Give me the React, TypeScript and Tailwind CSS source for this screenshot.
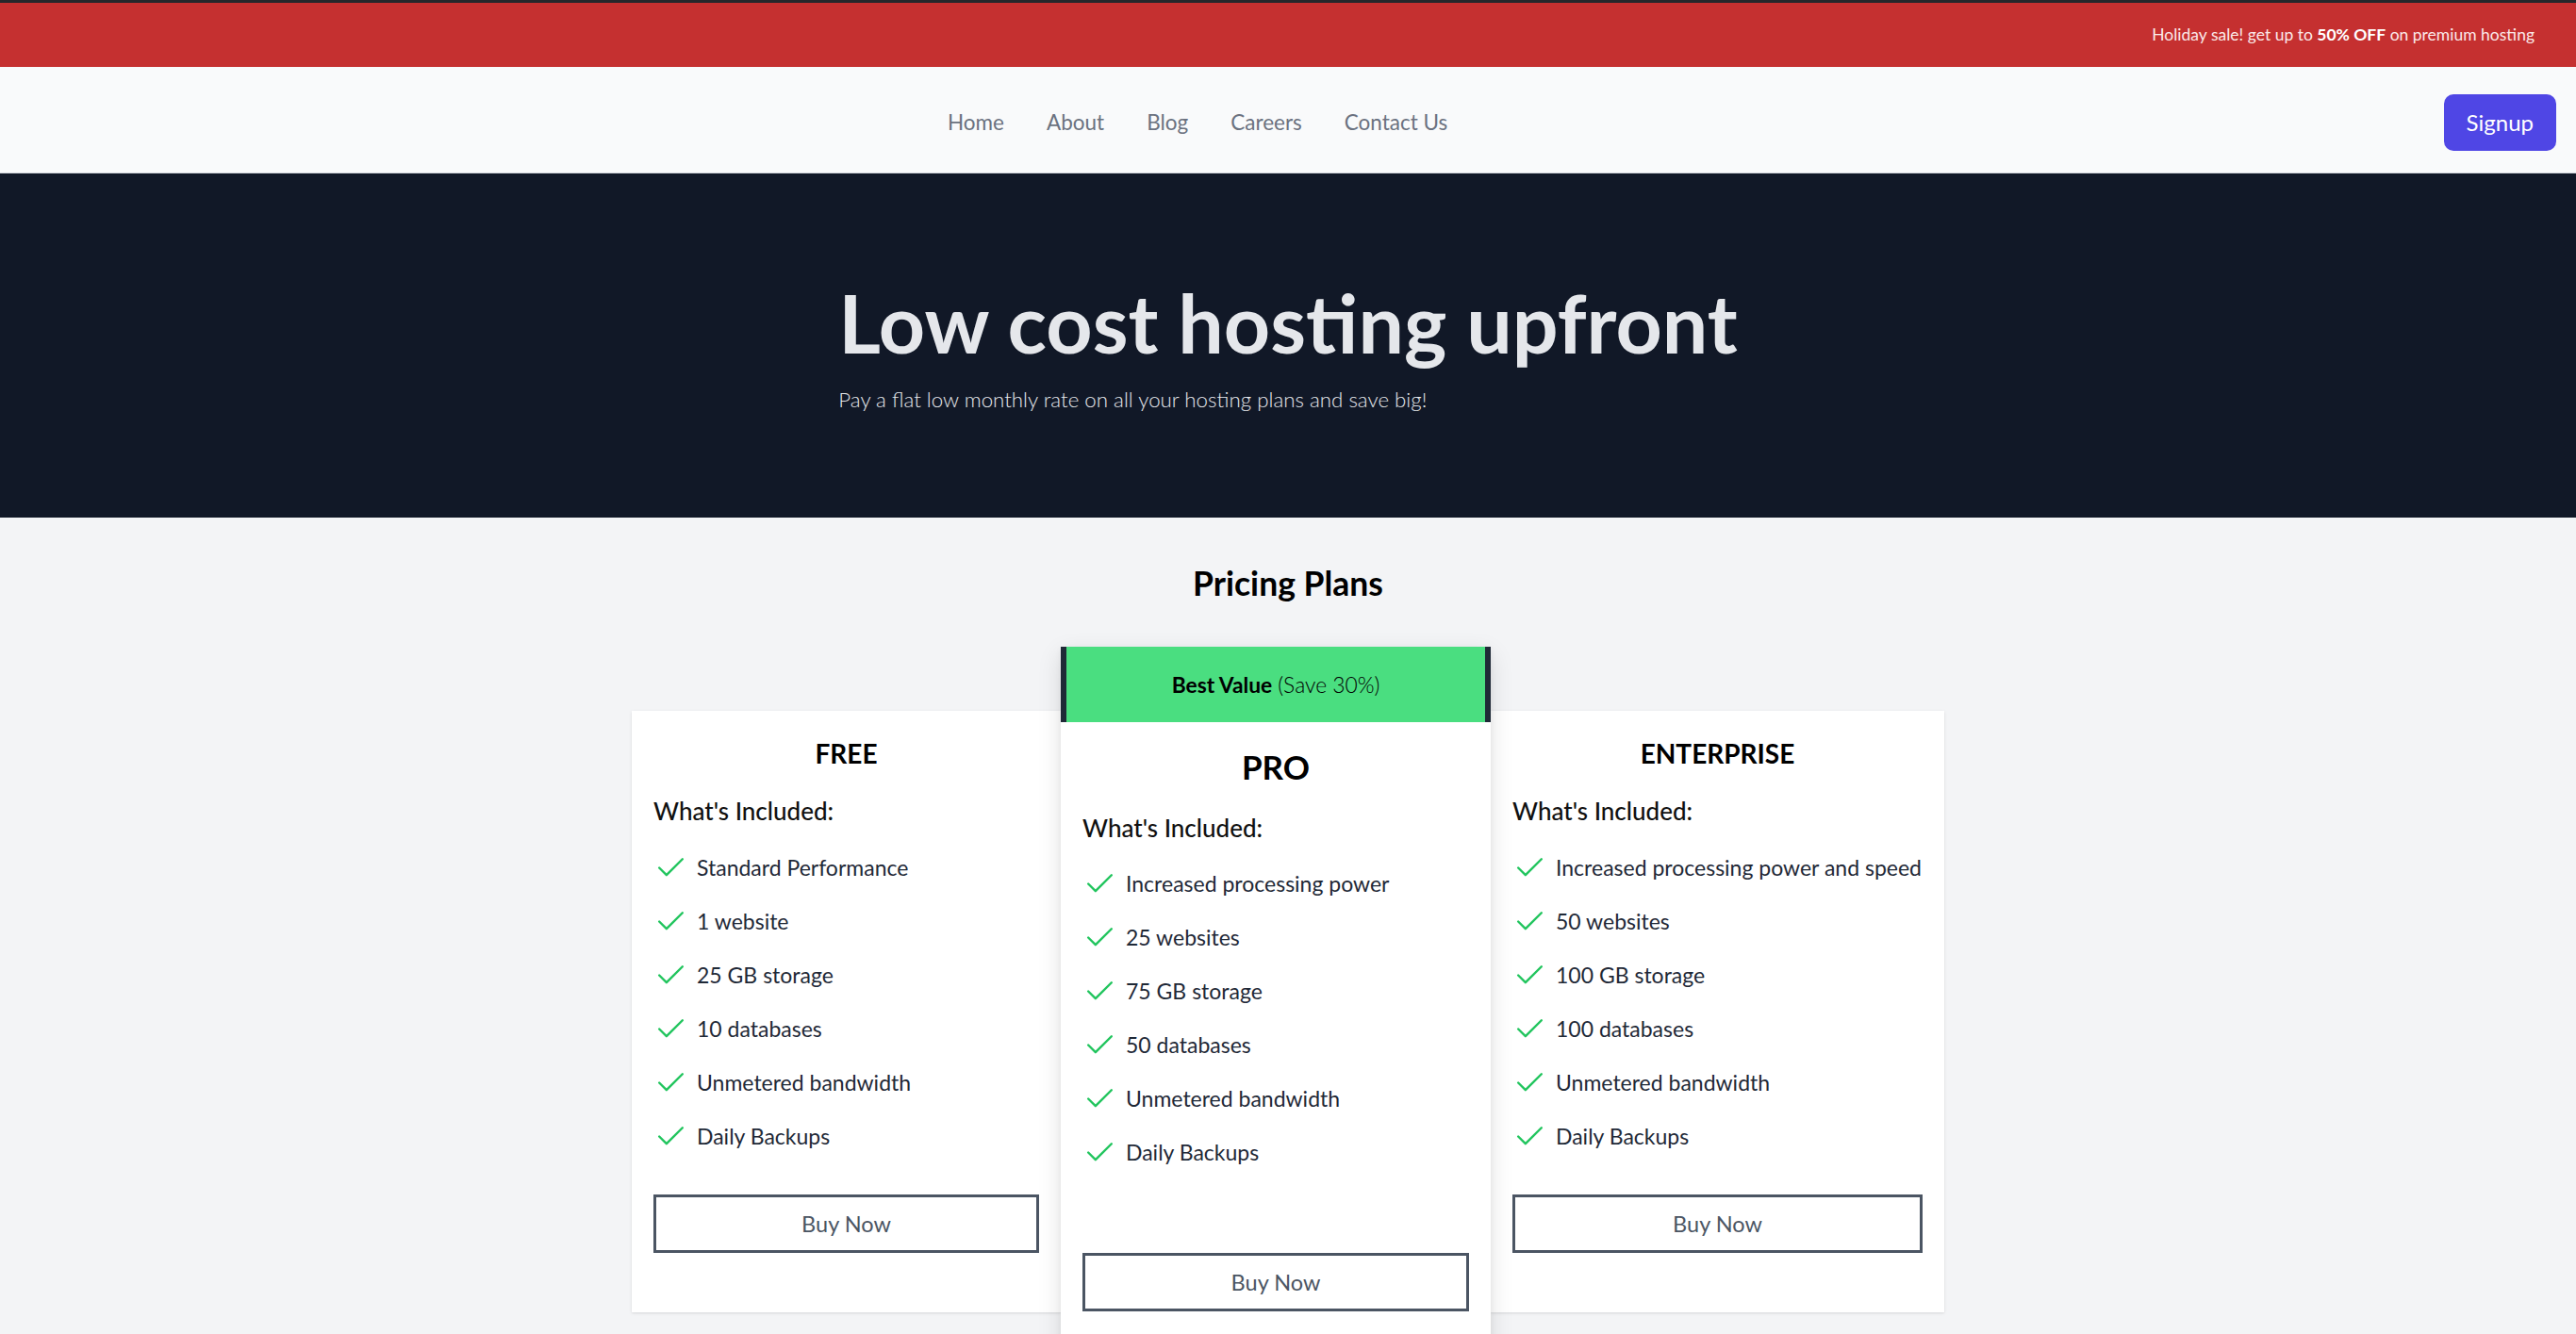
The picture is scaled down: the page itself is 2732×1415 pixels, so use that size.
import React from 'react';
import { Check } from 'lucide-react';

interface Plan {
  name: string;
  features: string[];
}

const freePlan: Plan = {
  name: 'FREE',
  features: ['Standard Performance', '1 website', '25 GB storage', '10 databases', 'Unmetered bandwidth', 'Daily Backups'],
};

const proPlan: Plan = {
  name: 'PRO',
  features: ['Increased processing power', '25 websites', '75 GB storage', '50 databases', 'Unmetered bandwidth', 'Daily Backups'],
};

const enterprisePlan: Plan = {
  name: 'ENTERPRISE',
  features: [
    'Increased processing power and speed',
    '50 websites',
    '100 GB storage',
    '100 databases',
    'Unmetered bandwidth',
    'Daily Backups',
  ],
};

const navLinks = ['Home', 'About', 'Blog', 'Careers', 'Contact Us'];

const FeatureList: React.FC<{ features: string[] }> = ({ features }) => (
  <ul className="flex flex-col gap-[20px]">
    {features.map((feature) => (
      <li key={feature} className="flex h-[37px] items-center gap-[9px]">
        <Check className="h-[37px] w-[37px] shrink-0 text-[#22c55e]" strokeWidth={1.6} />
        <span className="whitespace-nowrap text-[23px] leading-[35px] text-[#1f2937]">{feature}</span>
      </li>
    ))}
  </ul>
);

const BuyButton: React.FC<{ className?: string }> = ({ className = '' }) => (
  <button
    className={`block w-full border-[3px] border-[#4b5563] bg-white py-[10.5px] text-[23.5px] leading-[35px] text-[#4b5563] ${className}`}
  >
    Buy Now
  </button>
);

const SideCard: React.FC<{ plan: Plan; width: string }> = ({ plan, width }) => (
  <div
    className={`${width} mt-[68px] bg-white px-[23px] pt-[25px] pb-[63px] shadow-[0_1px_4px_rgba(0,0,0,0.08),0_1px_2px_rgba(0,0,0,0.05)]`}
  >
    <h3 className="text-center text-[28px] leading-[40px] font-bold text-black">{plan.name}</h3>
    <h4 className="mt-[22px] text-[26px] leading-[38px] font-medium text-[#111111]">What's Included:</h4>
    <div className="mt-[22.5px]">
      <FeatureList features={plan.features} />
    </div>
    <BuyButton className="mt-[43.5px]" />
  </div>
);

const App: React.FC = () => {
  return (
    <div className="h-screen overflow-hidden bg-[#f3f4f6] font-['Lato',sans-serif]">
      {/* promo strip */}
      <div className="flex h-[71px] items-center justify-end border-t-[3px] border-[#26272b] bg-[#c53030] pr-[44px]">
        <p className="text-[17.5px] leading-[28px] text-[#fbe9e9]">
          Holiday sale! get up to <span className="font-bold text-white">50% OFF</span> on premium hosting
        </p>
      </div>

      {/* nav */}
      <nav className="flex h-[113px] items-center border-b border-[#d1d5db] bg-[#f9fafb] pt-[5px]">
        <ul className="ml-[1005px] flex items-center gap-[45px]">
          {navLinks.map((link) => (
            <li key={link} className="text-[22.5px] leading-[35px] text-[#6b7280]">
              {link}
            </li>
          ))}
        </ul>
        <button className="mr-[21px] ml-auto h-[60px] rounded-[10px] bg-[#4f46e5] px-[24px] text-[24px] text-white">
          Signup
        </button>
      </nav>

      {/* hero */}
      <section className="bg-[#111827] pt-[114.5px] pb-[109.5px]">
        <div className="mx-auto w-fit">
          <h1 className="text-[86px] leading-none font-bold text-[#e5e7eb]">Low cost hosting upfront</h1>
          <p className="mt-[22px] text-[22.3px] leading-[33px] font-light text-[#e5e7eb]">
            Pay a flat low monthly rate on all your hosting plans and save big!
          </p>
        </div>
      </section>

      {/* pricing */}
      <section className="pt-[46px]">
        <h2 className="text-center text-[35.5px] leading-[48px] font-bold text-black">Pricing Plans</h2>

        <div className="mt-[43px] flex items-start justify-center">
          <SideCard plan={freePlan} width="w-[455px]" />

          <div className="relative z-10 w-[456px] bg-white shadow-[0_8px_24px_rgba(0,0,0,0.12),0_2px_6px_rgba(0,0,0,0.06)]">
            <div className="flex h-[80px] items-center justify-center border-x-[6px] border-[#1f2937] bg-[#4ade80] text-[22.8px] text-black">
              <span className="font-bold">Best Value</span>
              <span className="ml-[6px] font-light">(Save 30%)</span>
            </div>
            <div className="px-[23px] pt-[22px] pb-[69px]">
              <h3 className="text-center text-[35px] leading-[50px] font-bold text-black">{proPlan.name}</h3>
              <h4 className="mt-[20.5px] text-[26px] leading-[38px] font-medium text-[#111111]">What's Included:</h4>
              <div className="mt-[22px]">
                <FeatureList features={proPlan.features} />
              </div>
              <BuyButton className="mt-[88.5px]" />
            </div>
          </div>

          <SideCard plan={enterprisePlan} width="w-[481px]" />
        </div>
      </section>
    </div>
  );
};

export default App;
